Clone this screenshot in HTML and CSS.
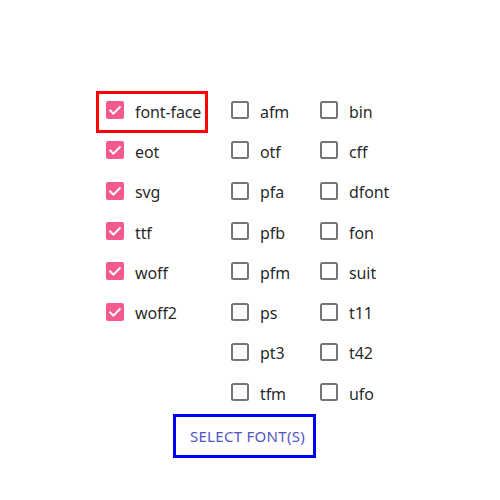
FILE: index.html
```html
<!DOCTYPE html>
<html>
<head>
<meta charset="utf-8">
<link rel="stylesheet" href="styles.css">
</head>
<body>
<div class="panel">
  <div class="cols">
    <div class="col col-a">
      <label class="item hl"><svg class="cb on" viewBox="0 0 24 24"><rect x="3" y="3" width="18" height="18" rx="2"/><polyline points="7.2,12.4 10.4,15.6 16.8,9.2"/></svg><span>font-face</span></label>
      <label class="item"><svg class="cb on" viewBox="0 0 24 24"><rect x="3" y="3" width="18" height="18" rx="2"/><polyline points="7.2,12.4 10.4,15.6 16.8,9.2"/></svg><span>eot</span></label>
      <label class="item"><svg class="cb on" viewBox="0 0 24 24"><rect x="3" y="3" width="18" height="18" rx="2"/><polyline points="7.2,12.4 10.4,15.6 16.8,9.2"/></svg><span>svg</span></label>
      <label class="item"><svg class="cb on" viewBox="0 0 24 24"><rect x="3" y="3" width="18" height="18" rx="2"/><polyline points="7.2,12.4 10.4,15.6 16.8,9.2"/></svg><span>ttf</span></label>
      <label class="item"><svg class="cb on" viewBox="0 0 24 24"><rect x="3" y="3" width="18" height="18" rx="2"/><polyline points="7.2,12.4 10.4,15.6 16.8,9.2"/></svg><span>woff</span></label>
      <label class="item"><svg class="cb on" viewBox="0 0 24 24"><rect x="3" y="3" width="18" height="18" rx="2"/><polyline points="7.2,12.4 10.4,15.6 16.8,9.2"/></svg><span>woff2</span></label>
    </div>
    <div class="col col-b">
      <label class="item"><svg class="cb off" viewBox="0 0 24 24"><rect x="4" y="4" width="16" height="16" rx="1.5"/></svg><span>afm</span></label>
      <label class="item"><svg class="cb off" viewBox="0 0 24 24"><rect x="4" y="4" width="16" height="16" rx="1.5"/></svg><span>otf</span></label>
      <label class="item"><svg class="cb off" viewBox="0 0 24 24"><rect x="4" y="4" width="16" height="16" rx="1.5"/></svg><span>pfa</span></label>
      <label class="item"><svg class="cb off" viewBox="0 0 24 24"><rect x="4" y="4" width="16" height="16" rx="1.5"/></svg><span>pfb</span></label>
      <label class="item"><svg class="cb off" viewBox="0 0 24 24"><rect x="4" y="4" width="16" height="16" rx="1.5"/></svg><span>pfm</span></label>
      <label class="item"><svg class="cb off" viewBox="0 0 24 24"><rect x="4" y="4" width="16" height="16" rx="1.5"/></svg><span>ps</span></label>
      <label class="item"><svg class="cb off" viewBox="0 0 24 24"><rect x="4" y="4" width="16" height="16" rx="1.5"/></svg><span>pt3</span></label>
      <label class="item"><svg class="cb off" viewBox="0 0 24 24"><rect x="4" y="4" width="16" height="16" rx="1.5"/></svg><span>tfm</span></label>
    </div>
    <div class="col col-c">
      <label class="item"><svg class="cb off" viewBox="0 0 24 24"><rect x="4" y="4" width="16" height="16" rx="1.5"/></svg><span>bin</span></label>
      <label class="item"><svg class="cb off" viewBox="0 0 24 24"><rect x="4" y="4" width="16" height="16" rx="1.5"/></svg><span>cff</span></label>
      <label class="item"><svg class="cb off" viewBox="0 0 24 24"><rect x="4" y="4" width="16" height="16" rx="1.5"/></svg><span>dfont</span></label>
      <label class="item"><svg class="cb off" viewBox="0 0 24 24"><rect x="4" y="4" width="16" height="16" rx="1.5"/></svg><span>fon</span></label>
      <label class="item"><svg class="cb off" viewBox="0 0 24 24"><rect x="4" y="4" width="16" height="16" rx="1.5"/></svg><span>suit</span></label>
      <label class="item"><svg class="cb off" viewBox="0 0 24 24"><rect x="4" y="4" width="16" height="16" rx="1.5"/></svg><span>t11</span></label>
      <label class="item"><svg class="cb off" viewBox="0 0 24 24"><rect x="4" y="4" width="16" height="16" rx="1.5"/></svg><span>t42</span></label>
      <label class="item"><svg class="cb off" viewBox="0 0 24 24"><rect x="4" y="4" width="16" height="16" rx="1.5"/></svg><span>ufo</span></label>
    </div>
  </div>
  <div class="actions">
    <button class="select-btn">SELECT FONT(S)</button>
  </div>
</div>
</body>
</html>
```
FILE: styles.css
```css
html, body {
  margin: 0;
  padding: 0;
  background: #fff;
}
body {
  font-family: "Noto Sans", "Open Sans", sans-serif;
  color: rgba(0, 0, 0, 0.87);
}
.panel {
  width: 299px;
  margin-left: 95px;
  padding-top: 90px;
}
.cols {
  display: flex;
  padding-left: 8px;
}
.col {
  display: flex;
  flex-direction: column;
}
.col-a { width: 125px; }
.col-b { width: 89px; }
.item {
  display: flex;
  align-items: center;
  gap: 8px;
  height: 40.3px;
  font-size: 16px;
  position: relative;
}
.item span {
  line-height: 1;
  padding-top: 3px;
  letter-spacing: -0.1px;
}
.cb {
  width: 24px;
  height: 24px;
  flex: none;
}
.cb.on rect {
  fill: #f55a8e;
}
.cb.on polyline {
  fill: none;
  stroke: #fff;
  stroke-width: 2;
  stroke-linecap: square;
}
.cb.off rect {
  fill: none;
  stroke: #757575;
  stroke-width: 2;
}
.hl::after {
  content: "";
  position: absolute;
  left: -7px;
  top: 1px;
  width: 112px;
  height: 42px;
  box-sizing: border-box;
  border: 3px solid #f00;
}
.actions {
  display: flex;
  justify-content: center;
  margin-top: 1.6px;
}
.select-btn {
  width: 143px;
  height: 44px;
  box-sizing: border-box;
  border: 3px solid #00f;
  background: #fff;
  color: #5254c6;
  font-family: "Noto Sans", "Open Sans", sans-serif;
  font-size: 15px;
  letter-spacing: 0.3px;
  padding: 1px 0 0 6px;
  margin: 0;
}
```
